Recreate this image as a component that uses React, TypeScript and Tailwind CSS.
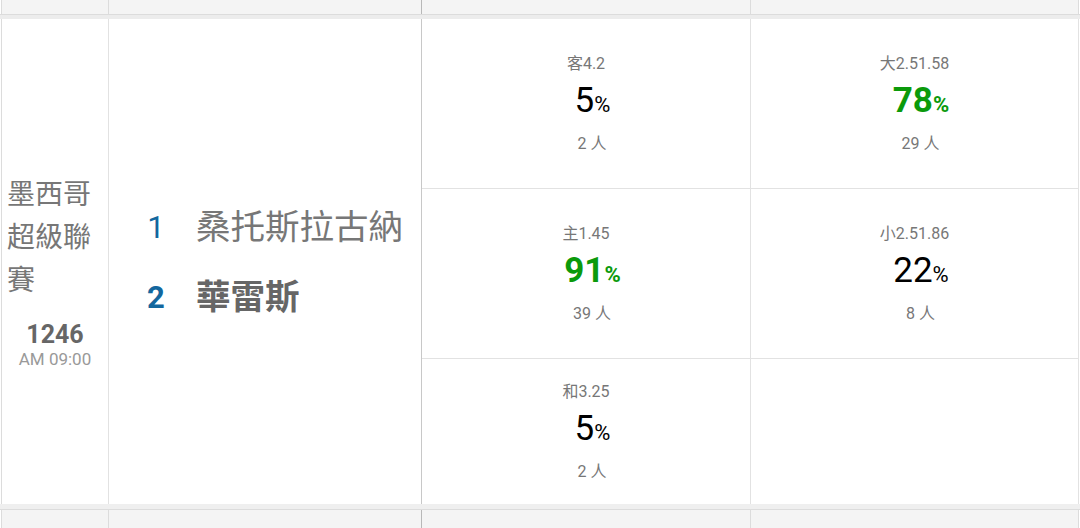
import React from "react";

const FONT = 'font-["Roboto","Noto_Sans_CJK_TC",sans-serif]';

function GrayRow({ h }: { h: string }) {
  return (
    <div className={`flex ml-[1px] w-[1078px] ${h} bg-[#f4f4f4] border-l border-[#dcdcdc]`}>
      <div className="w-[107px] h-full border-r border-[#dcdcdc]" />
      <div className="w-[313px] h-full border-r border-[#b8b8b8]" />
      <div className="w-[329px] h-full border-r border-[#dcdcdc]" />
      <div className="w-[328px] h-full border-r border-[#dcdcdc]" />
    </div>
  );
}

function OddsCell({
  label,
  pct,
  count,
  win,
  className,
}: {
  label?: string;
  pct?: string;
  count?: string;
  win?: boolean;
  className: string;
}) {
  return (
    <div className={`flex flex-col items-center justify-center ${className}`}>
      {label && (
        <>
          <div className="text-[16px] leading-[20px] text-[#777]">{label}</div>
          <div
            className={`mt-[8px] pl-[13px] leading-[38px] ${
              win ? "text-[#0b9a0b] font-bold" : "text-black"
            }`}
          >
            <span className="text-[35px]">{pct}</span>
            <span className="text-[22px]">%</span>
          </div>
          <div className="mt-[8px] pl-[12px] text-[16px] leading-[20px] text-[#777]">{count}</div>
        </>
      )}
    </div>
  );
}

export default function App() {
  return (
    <div className={`w-[1080px] h-[528px] bg-white overflow-hidden ${FONT}`}>
      <GrayRow h="h-[14px]" />
      <div className="h-[1px] bg-[#dcdcdc]" />
      <div className="h-[4px] bg-[#ececec]" />
      <div className="flex ml-[1px] w-[1078px] h-[485px] border-l border-[#dcdcdc]">
        {/* league */}
        <div className="w-[107px] h-full border-r border-[#e2e2e2] flex flex-col justify-center pt-[19px]">
          <div className="pl-[5px] pr-[5px] text-[28px] leading-[43px] text-[#777]">
            墨西哥超級聯賽
          </div>
          <div className="mt-[19px] text-center text-[25px] leading-[28px] font-bold text-[#666]">
            1246
          </div>
          <div className="text-center text-[17px] leading-[21px] text-[#999]">AM 09:00</div>
        </div>
        {/* teams */}
        <div className="w-[313px] h-full border-r border-[#c8c8c8] flex flex-col justify-center pl-[35px] pt-[3px]">
          <div className="flex items-center h-[70px]">
            <div className="w-[24px] text-center text-[31px] text-[#13679e]">1</div>
            <div className="ml-[28px] text-[34.5px] text-[#777]">桑托斯拉古納</div>
          </div>
          <div className="flex items-center h-[70px]">
            <div className="w-[24px] text-center text-[31px] font-bold text-[#13679e]">2</div>
            <div className="ml-[28px] text-[34.5px] font-bold text-[#666]">華雷斯</div>
          </div>
        </div>
        {/* odds col 3 */}
        <div className="w-[329px] h-full border-r border-[#e2e2e2] flex flex-col">
          <OddsCell className="h-[170px] border-b border-[#e2e2e2]" label="客4.2" pct="5" count="2 人" />
          <OddsCell className="h-[170px] border-b border-[#e2e2e2]" label="主1.45" pct="91" count="39 人" win />
          <OddsCell className="flex-1" label="和3.25" pct="5" count="2 人" />
        </div>
        {/* odds col 4 */}
        <div className="w-[328px] h-full border-r border-[#e2e2e2] flex flex-col">
          <OddsCell className="h-[170px] border-b border-[#e2e2e2]" label="大2.51.58" pct="78" count="29 人" win />
          <OddsCell className="h-[170px] border-b border-[#e2e2e2]" label="小2.51.86" pct="22" count="8 人" />
          <OddsCell className="flex-1" />
        </div>
      </div>
      <div className="h-[5px] bg-[#efefef]" />
      <div className="h-[1px] bg-[#dcdcdc]" />
      <GrayRow h="h-[18px]" />
    </div>
  );
}
